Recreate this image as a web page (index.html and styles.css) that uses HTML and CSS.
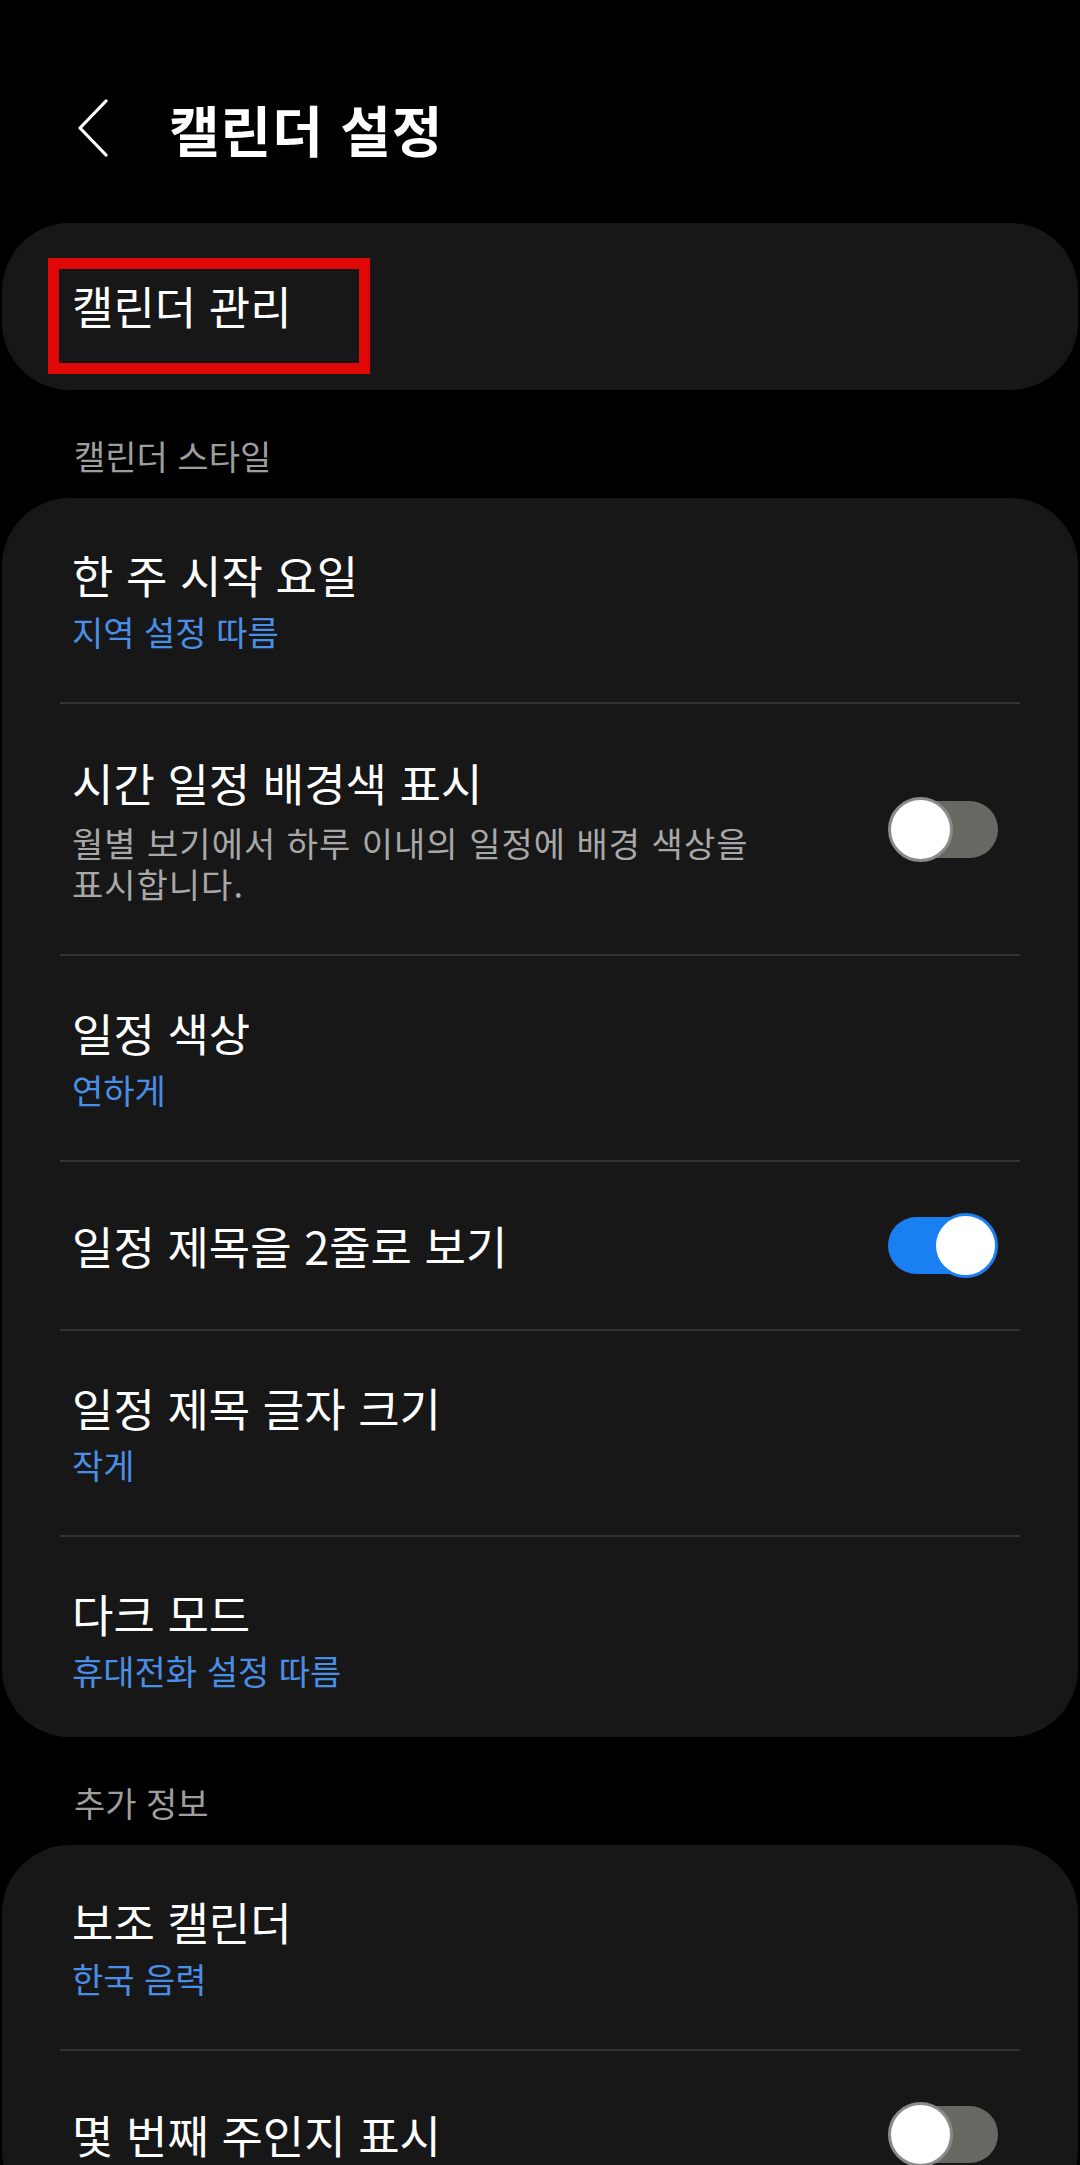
FILE: index.html
```html
<!DOCTYPE html>
<html lang="ko">
<head>
    <meta charset="UTF-8">
    <meta name="viewport" content="width=device-width, initial-scale=1.0">
    <title>캘린더 설정</title>
    <link rel="stylesheet" href="styles.css">
</head>
<body>
    <div class="screen">
        <header class="appbar">
            <svg class="back" viewBox="0 0 32 58" width="32" height="58">
                <polyline points="29,2 3,29 29,56" fill="none" stroke="#fff" stroke-width="3.2" stroke-linecap="round" stroke-linejoin="round"/>
            </svg>
            <h1>캘린더 설정</h1>
        </header>

        <div class="card single">
            <div class="row manage">
                <div class="title">캘린더 관리</div>
            </div>
            <div class="highlight"></div>
        </div>

        <div class="section-label">캘린더 스타일</div>
        <div class="card">
            <div class="row">
                <div class="text">
                    <div class="title">한 주 시작 요일</div>
                    <div class="sub">지역 설정 따름</div>
                </div>
            </div>
            <div class="row tall">
                <div class="text">
                    <div class="title">시간 일정 배경색 표시</div>
                    <div class="desc">월별 보기에서 하루 이내의 일정에 배경 색상을 표시합니다.</div>
                </div>
                <div class="switch"><span class="track"></span><span class="knob"></span></div>
            </div>
            <div class="row">
                <div class="text">
                    <div class="title">일정 색상</div>
                    <div class="sub">연하게</div>
                </div>
            </div>
            <div class="row compact">
                <div class="text">
                    <div class="title">일정 제목을 2줄로 보기</div>
                </div>
                <div class="switch on"><span class="track"></span><span class="knob"></span></div>
            </div>
            <div class="row">
                <div class="text">
                    <div class="title">일정 제목 글자 크기</div>
                    <div class="sub">작게</div>
                </div>
            </div>
            <div class="row last">
                <div class="text">
                    <div class="title">다크 모드</div>
                    <div class="sub">휴대전화 설정 따름</div>
                </div>
            </div>
        </div>

        <div class="section-label">추가 정보</div>
        <div class="card">
            <div class="row">
                <div class="text">
                    <div class="title">보조 캘린더</div>
                    <div class="sub">한국 음력</div>
                </div>
            </div>
            <div class="row compact">
                <div class="text">
                    <div class="title">몇 번째 주인지 표시</div>
                </div>
                <div class="switch"><span class="track"></span><span class="knob"></span></div>
            </div>
        </div>
    </div>
</body>
</html>
```

FILE: styles.css
```css
html, body {
    margin: 0;
    background: #000;
    height: 2165px;
    overflow: hidden;
}
.screen {
    font-family: "Noto Sans CJK KR", "Noto Sans", sans-serif;
    color: #fff;
}
.appbar {
    display: flex;
    align-items: center;
    gap: 60px;
    padding: 90px 0 57px 77px;
    height: 76px;
}
.appbar h1 {
    margin: 0;
    font-size: 55px;
    font-weight: 700;
    line-height: 76px;
    letter-spacing: 1px;
}
.card {
    position: relative;
    background: #171717;
    border-radius: 68px;
    margin: 0 2px;
    padding: 0 58px;
}
.row {
    display: flex;
    align-items: center;
    gap: 48px;
    padding: 48px 22px 48px 12px;
}
.row + .row {
    border-top: 2px solid #333;
}
.row.tall {
    padding-top: 50px;
    padding-bottom: 50px;
}
.row.compact {
    padding-top: 51px;
    padding-bottom: 51px;
}
.row.last {
    padding-bottom: 44px;
}
.row.manage {
    padding: 54px 12px 55px;
}
.text {
    flex: 1;
}
.title {
    font-size: 45px;
    line-height: 58px;
}
.sub {
    margin-top: 6px;
    font-size: 34px;
    line-height: 44px;
    color: #4a8ee6;
}
.desc {
    margin-top: 10px;
    font-size: 34px;
    line-height: 41px;
    letter-spacing: 1px;
    color: #a8a8a8;
    word-break: keep-all;
}
.highlight {
    position: absolute;
    left: 46px;
    top: 35px;
    width: 300px;
    height: 94px;
    border: 11px solid #e00707;
}
.section-label {
    padding: 46px 0 22px 74px;
    font-size: 34px;
    line-height: 40px;
    color: #9e9e9e;
}
.switch {
    position: relative;
    flex: none;
    width: 110px;
    height: 65px;
}
.track {
    position: absolute;
    top: 4px;
    bottom: 4px;
    left: 12px;
    right: 0;
    border-radius: 30px;
    background: #686863;
}
.knob {
    position: absolute;
    top: 0;
    left: 0;
    width: 59px;
    height: 59px;
    border-radius: 50%;
    background: #fff;
    border: 3px solid #8a8a8a;
}
.switch.on .track {
    left: 0;
    right: 10px;
    background: #1a7ff2;
}
.switch.on .knob {
    left: auto;
    right: 0;
    border-color: #1a7ff2;
}
```
